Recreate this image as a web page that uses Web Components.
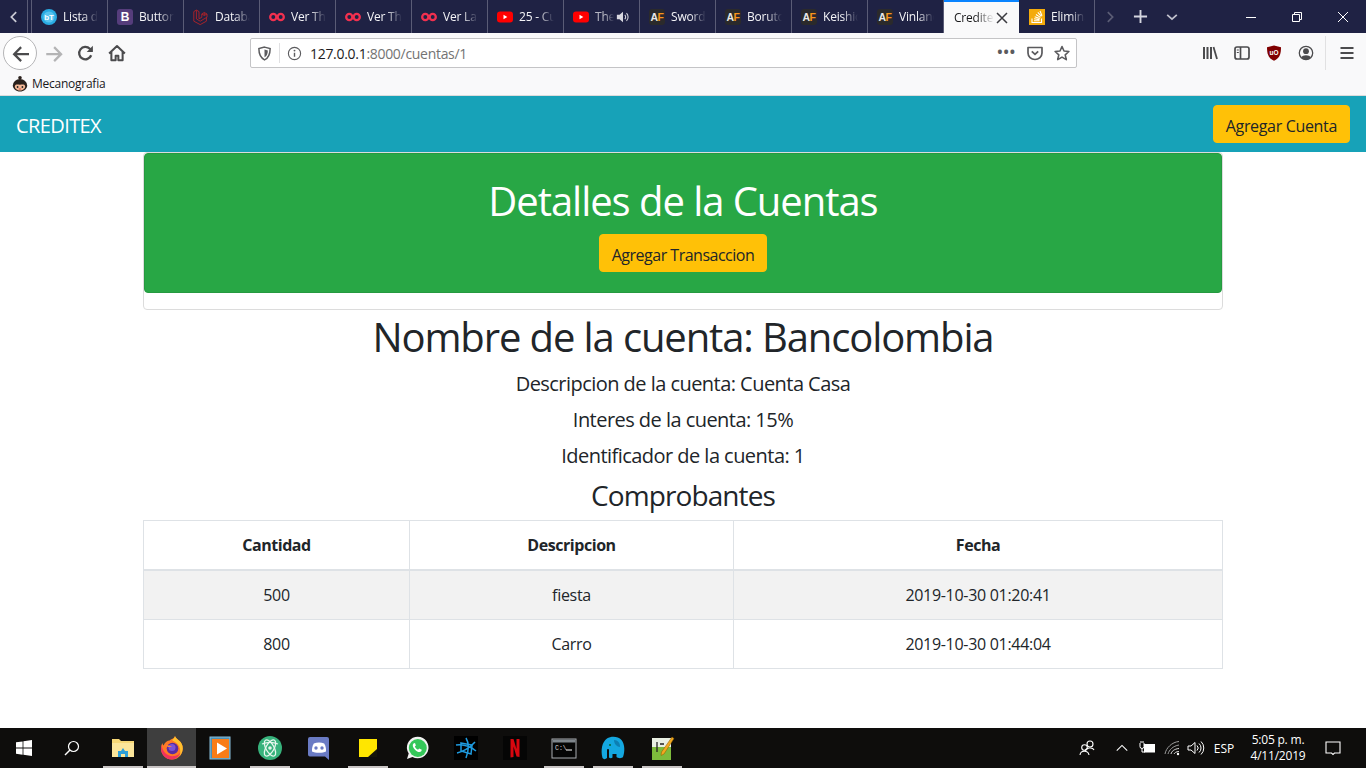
<!DOCTYPE html>
<html lang="es">
<head>
<meta charset="utf-8">
<title>CREDITEX</title>
<style>
  html, body { margin: 0; height: 100%; overflow: hidden; background: #fff; }
  body { display: flex; flex-direction: column; height: 768px; font-family: "Open Sans", "Noto Sans", sans-serif; color: #212529; }
  main-content { flex: 1; }
</style>
</head>
<body>
<browser-tabs></browser-tabs>
<browser-toolbar></browser-toolbar>
<browser-bookmarks></browser-bookmarks>
<app-navbar brand="CREDITEX" action="Agregar Cuenta"></app-navbar>
<main-content>
  <account-card title="Detalles de la Cuentas" action="Agregar Transaccion"></account-card>
  <account-info name="Nombre de la cuenta: Bancolombia">
    <p>Descripcion de la cuenta: Cuenta Casa</p>
    <p>Interes de la cuenta: 15%</p>
    <p>Identificador de la cuenta: 1</p>
  </account-info>
  <receipts-table title="Comprobantes"></receipts-table>
</main-content>
<win-taskbar></win-taskbar>

<script>
const ICONS = {
  ht: `<circle cx="8" cy="8" r="8" fill="#29abe2"/><circle cx="8" cy="8" r="5.6" fill="#58c4ef"/><text x="8" y="11" text-anchor="middle" font-size="8" font-weight="700" fill="#fff" font-family="Liberation Sans">bT</text>`,
  bootstrap: `<rect width="16" height="16" rx="3" fill="#563d7c"/><text x="8" y="12.4" text-anchor="middle" font-size="12" font-weight="700" fill="#fff" font-family="Liberation Sans">B</text>`,
  laravel: `<g fill="none" stroke="#a5222a" stroke-width="1" stroke-linejoin="round"><path d="M.8 2.6v9.6l6.4 3.4 6.2-3.4V8.8"/><path d="M.8 2.6l2.6-1.5L6 2.6v7.2l2.8-1.5V5l2.5-1.5L14 5v3.2l-6.8 4-3.6-2.2M6 9.8"/><path d="M3.4 1.1v9M8.800 5l2.500 1.500L14 5M11.300 3.500v3"/></g>`,
  infinity: `<g fill="none" stroke="#f2304f" stroke-width="2.300"><circle cx="4.300" cy="8" r="3.100"/><circle cx="11.700" cy="8" r="3.100"/></g>`,
  youtube: `<rect y="2.500" width="16" height="11" rx="3" fill="#f00"/><path d="M6.500 5.800v4.400L10.300 8z" fill="#fff"/>`,
  af: `<rect width="16" height="16" rx="3" fill="#2b2a2b"/><text x="1.500" y="12" font-size="10.500" font-weight="700" fill="#e8e8e8" font-family="Liberation Sans">A</text><text x="8.500" y="12" font-size="10.500" font-weight="700" fill="#f7941d" font-family="Liberation Sans">F</text>`,
  stack: `<rect width="16" height="16" fill="#f4ab0c"/><g fill="none" stroke="#fff" stroke-width="1.100"><path d="M3 9.500v4h9.500v-4"/><path d="M5 11.800h5.500M5.100 9.800l5.400.8M5.700 7.700l5.100 1.900M6.900 5.500l4.600 2.900M8.800 3.300l3.600 4.100M11 2l2 4.800"/></g>`,
  sound: `<path d="M1 5.500h3L8 2v12L4 10.500H1z" fill="#d8d8e0"/><path d="M10 5.500a3.500 3.500 0 0 1 0 5M12 3.500a6.500 6.500 0 0 1 0 9" fill="none" stroke="#d8d8e0" stroke-width="1.200"/>`,
  close: `<path d="M3 3l10 10M13 3L3 13" fill="none" stroke="#3a3a3f" stroke-width="1.500"/>`,
  back: `<path d="M16 9H3M9 2.800L2.800 9 9 15.200" fill="none" stroke="#4b4b4d" stroke-width="2"/>`,
  forward: `<path d="M2 9h13M9 2.800L15.200 9 9 15.200" fill="none" stroke="#b4b4b5" stroke-width="2"/>`,
  reload: `<path d="M13.500 10a5.500 5.500 0 1 1-1.200-5.700L14 6" fill="none" stroke="#4b4b4d" stroke-width="2"/><path d="M15 1.500V7H9.500z" fill="#4b4b4d"/>`,
  home: `<path d="M1 8.500L8 1.800l7 6.700M3 7v7.500h3.800v-4h2.400v4H13V7" fill="none" stroke="#4b4b4d" stroke-width="1.800" stroke-linejoin="round"/>`,
  shield: `<path d="M8 1.200l6 1.600c0 6-1.500 9.800-6 12-4.500-2.200-6-6-6-12z" fill="none" stroke="#5b5b5e" stroke-width="1.600"/><path d="M8 3.800l3.500.9c0 3.600-1 6-3.500 7.400z" fill="#5b5b5e"/>`,
  info: `<circle cx="8" cy="8" r="6.500" fill="none" stroke="#5b5b5e" stroke-width="1.200"/><path d="M8 7.200v4.300" stroke="#5b5b5e" stroke-width="1.500"/><circle cx="8" cy="4.900" r="1" fill="#5b5b5e"/>`,
  pocket: `<path d="M1 2.500h14v5.500a7 6.500 0 0 1-14 0z" fill="none" stroke="#5b5b5e" stroke-width="1.700" stroke-linejoin="round"/><path d="M4.800 6.300L8 9.300l3.200-3" fill="none" stroke="#5b5b5e" stroke-width="1.800"/>`,
  star: `<path d="M8 1.500l2 4.500 4.900.5-3.700 3.300 1.100 4.800L8 12.100l-4.300 2.500 1.100-4.800L1.100 6.500 6 6z" fill="none" stroke="#5b5b5e" stroke-width="1.600" stroke-linejoin="round"/>`,
  library: `<path d="M2 2v12M5.500 2v12M9 2v12" stroke="#4b4b4d" stroke-width="2" fill="none"/><path d="M11.500 2l3.500 12" stroke="#4b4b4d" stroke-width="1.800" fill="none"/>`,
  sidebar: `<rect x="1" y="2" width="14" height="12" rx="2" fill="none" stroke="#4b4b4d" stroke-width="1.700"/><path d="M6.500 2v12" stroke="#4b4b4d" stroke-width="1.700"/><path d="M2.800 5h2M2.800 7.500h2" stroke="#4b4b4d"/>`,
  ublock: `<path d="M8 .500l7 1.800c0 7-1.500 11-7 13.500C2.500 13.300 1 9.300 1 2.300z" fill="#800000"/><text x="8" y="10" text-anchor="middle" font-size="6.500" font-weight="700" fill="#fff" font-family="Liberation Sans">uO</text>`,
  account: `<circle cx="8" cy="8" r="6.700" fill="none" stroke="#4b4b4d" stroke-width="1.300"/><circle cx="8" cy="6.200" r="2.900" fill="#4b4b4d"/><path d="M3.300 12.500c1-3 8.400-3 9.400 0A6.500 6.500 0 0 1 3.300 12.500z" fill="#4b4b4d"/>`,
  menu: `<path d="M1.500 3h13M1.500 8h13M1.500 13h13" stroke="#4b4b4d" stroke-width="2"/>`,
  kid: `<path d="M.8 9.500a7.200 6.500 0 0 1 14.400 0c0 3.300-3.300 6-7.200 6S.8 12.800.8 9.500z" fill="#2a211c"/><circle cx="8" cy="1.800" r="1.800" fill="#2a211c"/><path d="M2.800 10.200c1-2.600 3-1.500 5.200-1.500s4.200-1.100 5.200 1.500c0 2.500-2.400 4.300-5.200 4.300s-5.200-1.800-5.200-4.300z" fill="#f4b896"/><circle cx="5.600" cy="11" r=".9" fill="#222"/><circle cx="10.400" cy="11" r=".9" fill="#222"/><path d="M6.800 13h2.400" stroke="#b33" stroke-width=".8"/>`,
  chevLeft: `<path d="M10.500 2.500L5 8l5.500 5.500" fill="none" stroke="#c9cad4" stroke-width="2"/>`,
  chevRight: `<path d="M5.500 2.500L11 8l-5.500 5.500" fill="none" stroke="#5b5d75" stroke-width="2"/>`,
  plus: `<path d="M8 1v14M1 8h14" stroke="#d5d6df" stroke-width="2"/>`,
  chevDown: `<path d="M2.500 5.500L8 10.500l5.500-5" fill="none" stroke="#c0c1cd" stroke-width="2"/>`,
  winMin: `<path d="M3 8.500h10" stroke="#fff"/>`,
  winMax: `<path d="M3.500 5.500h7v7h-7zM5.500 5.500v-2h7v7h-2" fill="none" stroke="#fff"/>`,
  winClose: `<path d="M3 3l10 10M13 3L3 13" stroke="#fff"/>`,
  windows: `<path d="M0 2.300l6.600-.9v6.200H0zM7.400 1.300L16 0v7.600H7.400zM0 8.400h6.600v6.300L0 13.800zM7.400 8.400H16V16l-8.600-1.200z" fill="#fff"/>`,
  search: `<circle cx="9.500" cy="6.500" r="5" fill="none" stroke="#fff" stroke-width="1.200"/><path d="M6 10L1 15" stroke="#fff" stroke-width="1.400"/>`,
  folder: `<path d="M1 3h7l2 2h13v16H1z" fill="#f6d776"/><path d="M1 7h22v14H1z" fill="#fbe59a"/><path d="M7 21v-6h3l2-3 2 3h3v6h-3v-3h-4v3z" fill="#2e9fd8"/>`,
  firefox: `<path d="M15 0c.5 3 6 4 7.500 10 1.500 7-3.500 13.500-10.500 13.500C5.500 23.500 1 18.500 1 12.500c0-2 .5-4 1.500-5.500 0 1 .5 2 1 2.500C5 6 7.500 4.500 9.500 4.500 11 3 14.500 2.500 15 0z" fill="#ff7a25"/><path d="M15 0c.5 3 6 4 7.500 10 .8 4-.5 7.500-3 10 1.500-4 1-9-2.500-12.500C15.500 6 13 5 12 4c1.200-.8 2.700-2 3-4z" fill="#ffc12e"/><path d="M1.500 9c1 7 6 12 13 11 2.500-.3 4.500-1.500 6-3.500-1.500 4-5 7-8.500 7C5.500 23.500 1 18.500 1 12.500c0-1.200.2-2.400.5-3.500z" fill="#f0325f"/><circle cx="12.500" cy="12.500" r="5.800" fill="#5a2ca0"/><circle cx="12" cy="11.500" r="3.500" fill="#7b52d6"/><path d="M6 9.500c2-1 4 .5 6 .5-1.500 1.500-4 1.500-6-.5z" fill="#ff8a3c"/>`,
  media: `<rect x="1" y="1" width="20" height="22" fill="#4b8fb4" stroke="#8ac0dc"/><rect x="3" y="3" width="17" height="19" fill="#f97c17"/><path d="M8 6.500v12L18 12.500z" fill="#fff"/>`,
  atom: `<circle cx="12" cy="12" r="12" fill="#37b27c"/><g fill="none" stroke="#e7f7ee" stroke-width="1.300"><ellipse cx="12" cy="12" rx="9" ry="4" transform="rotate(60 12 12)"/><ellipse cx="12" cy="12" rx="9" ry="4" transform="rotate(-60 12 12)"/><path d="M4 8c5-2 11-2 16 0"/></g><circle cx="12" cy="12" r="1.800" fill="#e7f7ee"/>`,
  discord: `<path d="M3 1h17a2 2 0 0 1 2 2v21l-4-3.500H3a2 2 0 0 1-2-2V3a2 2 0 0 1 2-2z" fill="#6a7bc4"/><path d="M5 15.500c-.3-3 .5-6 1.800-8 3-1.300 7.400-1.300 10.400 0 1.300 2 2.100 5 1.800 8-3 1.800-11 1.800-14 0z" fill="#fff"/><circle cx="9" cy="12" r="1.700" fill="#6a7bc4"/><circle cx="15" cy="12" r="1.700" fill="#6a7bc4"/>`,
  sticky: `<path d="M3 3h18v18H3z" fill="#ffe600"/><path d="M21 13v8h-9z" fill="#15150a"/>`,
  whatsapp: `<path d="M2 23l1.700-5.500A10.800 10.800 0 1 1 7.500 21z" fill="#f2f2f2"/><circle cx="12.800" cy="12" r="9" fill="#34c759"/><path d="M8.500 7.500c-1.500 1.500-.7 4 1.500 6.300s5 3 6.300 1.500l.5-1.500-2.700-1.300-1 1.200c-1.500-.5-2.700-1.800-3.300-3.300l1.100-1L10 6.900z" fill="#fff"/>`,
  battlenet: `<rect width="24" height="24" fill="#000"/><g fill="none" stroke="#1e9be0" stroke-width="1.500"><path d="M12 2c3 5 3 12 0 20M2 9c6-1 14 1 20 6M3 17c5-1 13-5 18-11"/><path d="M7 7l11 2-1 9-10-3z"/></g>`,
  netflix: `<rect width="24" height="24" fill="#050505"/><path d="M7.500 3h3l3 10V3h3v18l-3-.5-3-10V21l-3 .5z" fill="#d8070f"/>`,
  cmd: `<rect x="0" y="3" width="24" height="19" fill="#050505" stroke="#a9adb1"/><rect x="0.500" y="3.500" width="23" height="3" fill="#7f868c"/><text x="3" y="13.500" font-size="6.500" fill="#d8d8d8" font-family="Liberation Mono">C:\\</text><path d="M14 14h6" stroke="#fff"/>`,
  elephant: `<path d="M1.500 22C-.5 14 1 6 6 2.500c4-2.500 11-2.500 14.500 1.500 3.500 4.500 3.500 12 1.500 17-1 1.500-5 1.500-6.500 0v-3h-4v3.500c-1 1-2.500 1-3.500 0V14c0-1.500-2-1.500-2 0v8c-1.500 1.500-3.500 1.500-4.500 0z" fill="#14a7e0"/><path d="M13 4c4 0 6 3 6 7-3 0-6-3-6-7z" fill="#0d7fb3"/><circle cx="9" cy="9" r="1" fill="#063"/>`,
  notepad: `<rect x="2" y="2" width="19" height="22" fill="#e9efe3"/><rect x="2" y="11" width="19" height="13" fill="#7dbb3c"/><path d="M7 6v10M10 8h4" stroke="#222" stroke-width="1.300"/><path d="M22 1l2 1.500L14 18l-3 1.500.5-3.500z" fill="#f1a820" stroke="#8a5a00" stroke-width=".5"/>`,
  people: `<g fill="none" stroke="#fff" stroke-width="1.100"><circle cx="11" cy="4" r="3"/><path d="M6 11c.5-3 7.500-4.500 9-1"/><circle cx="5.500" cy="7.500" r="2.800"/><path d="M1 15c.5-5 8-5 9 0"/></g>`,
  caret: `<path d="M2 11l6-6 6 6" fill="none" stroke="#fff" stroke-width="1.200"/>`,
  battery: `<rect x="5.500" y="4.500" width="10" height="7.500" fill="#fff" stroke="#fff"/><path d="M1 3v3.500a2 2 0 0 0 4 0V3M2 1v2M4 1v2M3 8.500V12h3" fill="none" stroke="#fff"/>`,
  wifi: `<g fill="none" stroke="#9c9c9c"><path d="M1 14C2 8 8 2 15 1.500M4 14c1-4 5-8 11-9"/></g><path d="M7 14c.5-2.500 3-5 8-5.500M10 14c.5-1 2-2.500 5-2.500" fill="none" stroke="#ddd"/><circle cx="14" cy="14" r="1.200" fill="#fff"/>`,
  speaker: `<path d="M1 6h3l4-3.500v11L4 10H1z" fill="none" stroke="#fff"/><path d="M10 5.500a3.500 3.500 0 0 1 0 5M12 3.500a6 6 0 0 1 0 9M14 1.500a9 9 0 0 1 0 13" fill="none" stroke="#fff"/>`,
  notify: `<path d="M1 2h14v11H9.500L8 14.500 6.500 13H1z" fill="none" stroke="#fff" stroke-width="1.100"/>`
};
const BOX = { folder: 24, firefox: 24, media: 24, atom: 24, discord: 24, sticky: 24, whatsapp: 24, battlenet: 24, netflix: 24, cmd: 24, elephant: 24, notepad: 24 };

// Small helper so each class stays short
function shadow(host, html) {
  host.attachShadow({ mode: "open" }).innerHTML = html;
}

customElements.define("app-icon", class extends HTMLElement {
  connectedCallback() {
    const name = this.getAttribute("name");
    const size = this.getAttribute("size") || 16;
    const box = BOX[name] || 16;
    shadow(this, `
      <style>:host { display: inline-flex; flex: none; } svg { display: block; overflow: visible; }</style>
      <svg xmlns="http://www.w3.org/2000/svg" width="${size}" height="${size}" viewBox="0 0 ${box} ${box}">${ICONS[name]}</svg>`);
  }
});

customElements.define("browser-tab", class extends HTMLElement {
  connectedCallback() {
    const active = this.hasAttribute("active");
    const icon = this.getAttribute("icon");
    shadow(this, `
      <style>
        :host { display: flex; align-items: center; width: 76px; height: 33px; box-sizing: border-box; flex: none; padding-left: 9px; border-right: 1px solid #5a5c76; color: #f4f4f7; font-size: 12px; letter-spacing: -.2px; }
        :host([active]) { width: 75px; background: #f9f9fa; color: #18181a; border-top: 2px solid #0a84ff; border-right: 0; padding-left: 10px; }
        .label { margin: 0 9px 0 6px; flex: 1; overflow: hidden; white-space: nowrap; -webkit-mask-image: linear-gradient(to right, #000 55%, transparent 100%); mask-image: linear-gradient(to right, #000 55%, transparent 100%); }
        :host([active]) .label { margin: 0; }
        :host([sound]) .label { margin-right: 0; opacity: .7; }
        .tail { display: flex; margin-right: 9px; margin-left: 2px; }
        :host([active]) .tail { margin-left: 0; }
      </style>
      ${icon ? `<app-icon name="${icon}"></app-icon>` : ""}
      <div class="label"><slot></slot></div>
      ${active ? `<div class="tail"><app-icon name="close" size="16"></app-icon></div>` : ""}
      ${this.hasAttribute("sound") ? `<div class="tail"><app-icon name="sound" size="14"></app-icon></div>` : ""}`);
  }
});

customElements.define("browser-tabs", class extends HTMLElement {
  connectedCallback() {
    const tabs = [
      ["ht", "Lista de"], ["bootstrap", "Buttons"], ["laravel", "Database"], ["infinity", "Ver The"],
      ["infinity", "Ver The"], ["infinity", "Ver La"], ["youtube", "25 - Curso"], ["youtube", "The", "sound"],
      ["af", "Sword"], ["af", "Boruto"], ["af", "Keishic"], ["af", "Vinland"]
    ].map(([i, t, s]) => `<browser-tab icon="${i}" ${s ? "sound" : ""}>${t}</browser-tab>`).join("");
    shadow(this, `
      <style>
        :host { display: flex; height: 33px; background: #1f2244; flex: none; }
        .nav { display: flex; align-items: center; justify-content: center; }
        .first { width: 27px; border-right: 1px solid #5a5c76; margin-right: 3px; box-sizing: content-box; }
        .spacer { width: 1px; background: #5a5c76; }
        .right { flex: 1; display: flex; align-items: center; }
        .c1 { width: 30px; } .c2 { width: 30px; } .c3 { width: 34px; }
        .win { display: flex; margin-left: auto; }
        .win div { width: 46px; height: 32px; display: flex; align-items: center; justify-content: center; }
        .after-active { padding-left: 10px; }
      </style>
      <div class="nav first"><app-icon name="chevLeft" size="14"></app-icon></div>
      <div class="spacer"></div>
      ${tabs}
      <browser-tab active>Credite</browser-tab>
      <browser-tab class="after-active" icon="stack">Elimina</browser-tab>
      <div class="right">
        <div class="nav c1"><app-icon name="chevRight" size="14"></app-icon></div>
        <div class="nav c2"><app-icon name="plus" size="15"></app-icon></div>
        <div class="nav c3"><app-icon name="chevDown" size="14"></app-icon></div>
        <div class="win">
          <div><app-icon name="winMin"></app-icon></div>
          <div><app-icon name="winMax"></app-icon></div>
          <div><app-icon name="winClose"></app-icon></div>
        </div>
      </div>`);
  }
});

customElements.define("browser-toolbar", class extends HTMLElement {
  connectedCallback() {
    shadow(this, `
      <style>
        :host { display: flex; align-items: center; height: 40px; background: #f9f9fa; flex: none; }
        .left { width: 250px; display: flex; align-items: center; box-sizing: border-box; padding-left: 3px; flex: none; }
        .back { width: 34px; height: 34px; border: 1px solid #b5b5b7; border-radius: 50%; background: #fff; box-sizing: border-box; display: flex; align-items: center; justify-content: center; }
        .btn { width: 32px; display: flex; justify-content: center; }
        .url { width: 827px; height: 30px; box-sizing: border-box; background: #fff; border: 1px solid #c4c4c6; border-radius: 2px; display: flex; align-items: center; padding-left: 6px; font-size: 14px; letter-spacing: -.3px; color: #737373; flex: none; }
        .divider { width: 1px; height: 20px; background: #e0e0e2; margin: 0 7px 0 7px; }
        .url b { font-weight: 400; color: #1c1b22; margin-left: 8px; }
        .tools { margin-left: auto; display: flex; align-items: center; gap: 11px; padding-right: 6px; }
        .more { color: #5b5b5e; font-weight: 700; font-size: 14px; letter-spacing: 1px; line-height: 10px; margin-top: -2px; }
        .end { flex: 1; display: flex; align-items: center; padding-left: 117px; }
        .slot { width: 32px; display: flex; justify-content: center; flex: none; }
        .sep { width: 1px; height: 34px; background: #e1e1e2; margin: 0 13px 0 3px; flex: none; }
      </style>
      <div class="left">
        <div class="back"><app-icon name="back" size="18"></app-icon></div>
        <div class="btn"><app-icon name="forward" size="18"></app-icon></div>
        <div class="btn"><app-icon name="reload" size="18"></app-icon></div>
        <div class="btn"><app-icon name="home" size="18"></app-icon></div>
      </div>
      <div class="url">
        <app-icon name="shield" size="15"></app-icon>
        <div class="divider"></div>
        <app-icon name="info" size="15"></app-icon>
        <b>127.0.0.1</b>:8000/cuentas/1
        <div class="tools">
          <span class="more">•••</span>
          <app-icon name="pocket" size="16"></app-icon>
          <app-icon name="star" size="16"></app-icon>
        </div>
      </div>
      <div class="end">
        <div class="slot"><app-icon name="library"></app-icon></div>
        <div class="slot"><app-icon name="sidebar"></app-icon></div>
        <div class="slot"><app-icon name="ublock"></app-icon></div>
        <div class="slot"><app-icon name="account"></app-icon></div>
        <div class="sep"></div>
        <app-icon name="menu"></app-icon>
      </div>`);
  }
});

customElements.define("browser-bookmarks", class extends HTMLElement {
  connectedCallback() {
    shadow(this, `
      <style>
        :host { display: flex; align-items: center; box-sizing: border-box; height: 23px; padding: 0 0 1px 12px; gap: 4px; background: #f9f9fa; font-size: 12px; letter-spacing: -.25px; color: #18181a; flex: none; border-bottom: 1px solid #dcdcdc; }
      </style>
      <app-icon name="kid"></app-icon><span>Mecanografia</span>`);
  }
});

customElements.define("app-button", class extends HTMLElement {
  connectedCallback() {
    shadow(this, `
      <style>
        :host { display: inline-block; background: #ffc107; border: 1px solid #ffc107; border-radius: 4px; padding: 8px 12px 4px; font-size: 16px; line-height: 24px; color: #212529; letter-spacing: var(--track, -.33px); white-space: nowrap; }
      </style><slot></slot>`);
  }
});

customElements.define("app-navbar", class extends HTMLElement {
  connectedCallback() {
    shadow(this, `
      <style>
        :host { display: flex; align-items: center; justify-content: space-between; height: 56px; padding: 0 16px; background: #17a2b8; flex: none; }
        .brand { font-size: 20px; color: #fff; letter-spacing: -.6px; padding-top: 2px; }
      </style>
      <span class="brand">${this.getAttribute("brand")}</span>
      <app-button>${this.getAttribute("action")}</app-button>`);
  }
});

customElements.define("main-content", class extends HTMLElement {
  connectedCallback() {
    shadow(this, `
      <style>:host { display: block; width: 1080px; margin: 0 auto; text-align: center; }</style>
      <slot></slot>`);
  }
});

customElements.define("account-card", class extends HTMLElement {
  connectedCallback() {
    shadow(this, `
      <style>
        :host { display: block; height: 158px; box-sizing: border-box; border: 1px solid #dcdcdc; border-radius: 4px; }
        .header { height: 140px; box-sizing: border-box; background: #28a745; border: 1px solid #259a40; border-radius: 4px; padding-top: 23px; color: #fff; display: flex; flex-direction: column; align-items: center; }
        h1 { margin: 0 0 9px; font-size: 40px; font-weight: 400; line-height: 48px; letter-spacing: -1.05px; }
        app-button { --track: -.5px; }
      </style>
      <div class="header">
        <h1>${this.getAttribute("title")}</h1>
        <app-button>${this.getAttribute("action")}</app-button>
      </div>`);
  }
});

customElements.define("account-info", class extends HTMLElement {
  connectedCallback() {
    shadow(this, `
      <style>
        :host { display: block; padding-top: 3px; }
        h1 { margin: 0 0 8px; font-size: 40px; font-weight: 400; line-height: 48px; letter-spacing: -1.12px; }
        ::slotted(p) { margin: 0 0 6px; font-size: 20px; line-height: 30px; letter-spacing: -.54px; }
      </style>
      <h1>${this.getAttribute("name")}</h1>
      <slot></slot>`);
  }
});

customElements.define("receipts-table", class extends HTMLElement {
  connectedCallback() {
    const rows = [["500", "fiesta", "2019-10-30 01:20:41"], ["800", "Carro", "2019-10-30 01:44:04"]];
    shadow(this, `
      <style>
        :host { display: block; padding-top: 1px; }
        h3 { margin: 0 0 8px; font-size: 28px; font-weight: 400; line-height: 34px; letter-spacing: -.9px; }
        table { width: 100%; table-layout: fixed; border-collapse: collapse; font-size: 16px; letter-spacing: -.3px; }
        th, td { border: 1px solid #dee2e6; padding: 12px; line-height: 24px; text-align: center; }
        th { border-bottom-width: 2px; font-weight: 700; letter-spacing: -.45px; }
        tbody tr:nth-child(odd) { background: #f2f2f2; }
      </style>
      <h3>${this.getAttribute("title")}</h3>
      <table>
        <colgroup><col style="width:266px"><col style="width:324px"><col></colgroup>
        <thead><tr><th>Cantidad</th><th>Descripcion</th><th>Fecha</th></tr></thead>
        <tbody>${rows.map(r => `<tr>${r.map(c => `<td>${c}</td>`).join("")}</tr>`).join("")}</tbody>
      </table>`);
  }
});

customElements.define("win-taskbar", class extends HTMLElement {
  connectedCallback() {
    const apps = [
      ["folder", "run"], ["firefox", "active"], ["media", ""], ["atom", "run"], ["discord", ""], ["sticky", "run"],
      ["whatsapp", ""], ["battlenet", ""], ["netflix", ""], ["cmd", "run"], ["elephant", "run"], ["notepad", "run"]
    ].map(([i, c]) => `<div class="app ${c}"><app-icon name="${i}" size="24"></app-icon></div>`).join("");
    shadow(this, `
      <style>
        :host { display: flex; align-items: stretch; height: 40px; background: #0e0d0c; color: #fff; flex: none; font-size: 12px; }
        .cell { width: 48px; display: flex; align-items: center; justify-content: center; }
        .gap { width: 2px; }
        .app { width: 49px; position: relative; display: flex; align-items: center; justify-content: center; flex: none; }
        .app.run::after, .app.active::after { content: ""; position: absolute; bottom: 0; height: 2px; left: 5px; right: 4px; background: #c9c5c5; }
        .app.active { background: #3e3e3e; }
        .app.active::after { left: 0; right: 0; }
        .tray { margin-left: auto; display: flex; align-items: center; }
        .t { display: flex; justify-content: center; align-items: center; flex: none; }
        .clock { text-align: center; line-height: 16px; width: 70px; margin-left: 1px; white-space: nowrap; letter-spacing: -.2px; }
      </style>
      <div class="cell"><app-icon name="windows" size="16"></app-icon></div>
      <div class="cell"><app-icon name="search" size="16"></app-icon></div>
      <div class="gap"></div>
      ${apps}
      <div class="tray">
        <div class="t" style="width:24px;margin-right:11px"><app-icon name="people"></app-icon></div>
        <div class="t" style="width:24px"><app-icon name="caret" size="14"></app-icon></div>
        <div class="t" style="width:26px"><app-icon name="battery"></app-icon></div>
        <div class="t" style="width:24px"><app-icon name="wifi"></app-icon></div>
        <div class="t" style="width:22px"><app-icon name="speaker"></app-icon></div>
        <div class="t" style="width:36px">ESP</div>
        <div class="clock">5:05 p. m.<br>4/11/2019</div>
        <div class="t" style="width:40px;margin-right:13px"><app-icon name="notify"></app-icon></div>
      </div>`);
  }
});
</script>
</body>
</html>
